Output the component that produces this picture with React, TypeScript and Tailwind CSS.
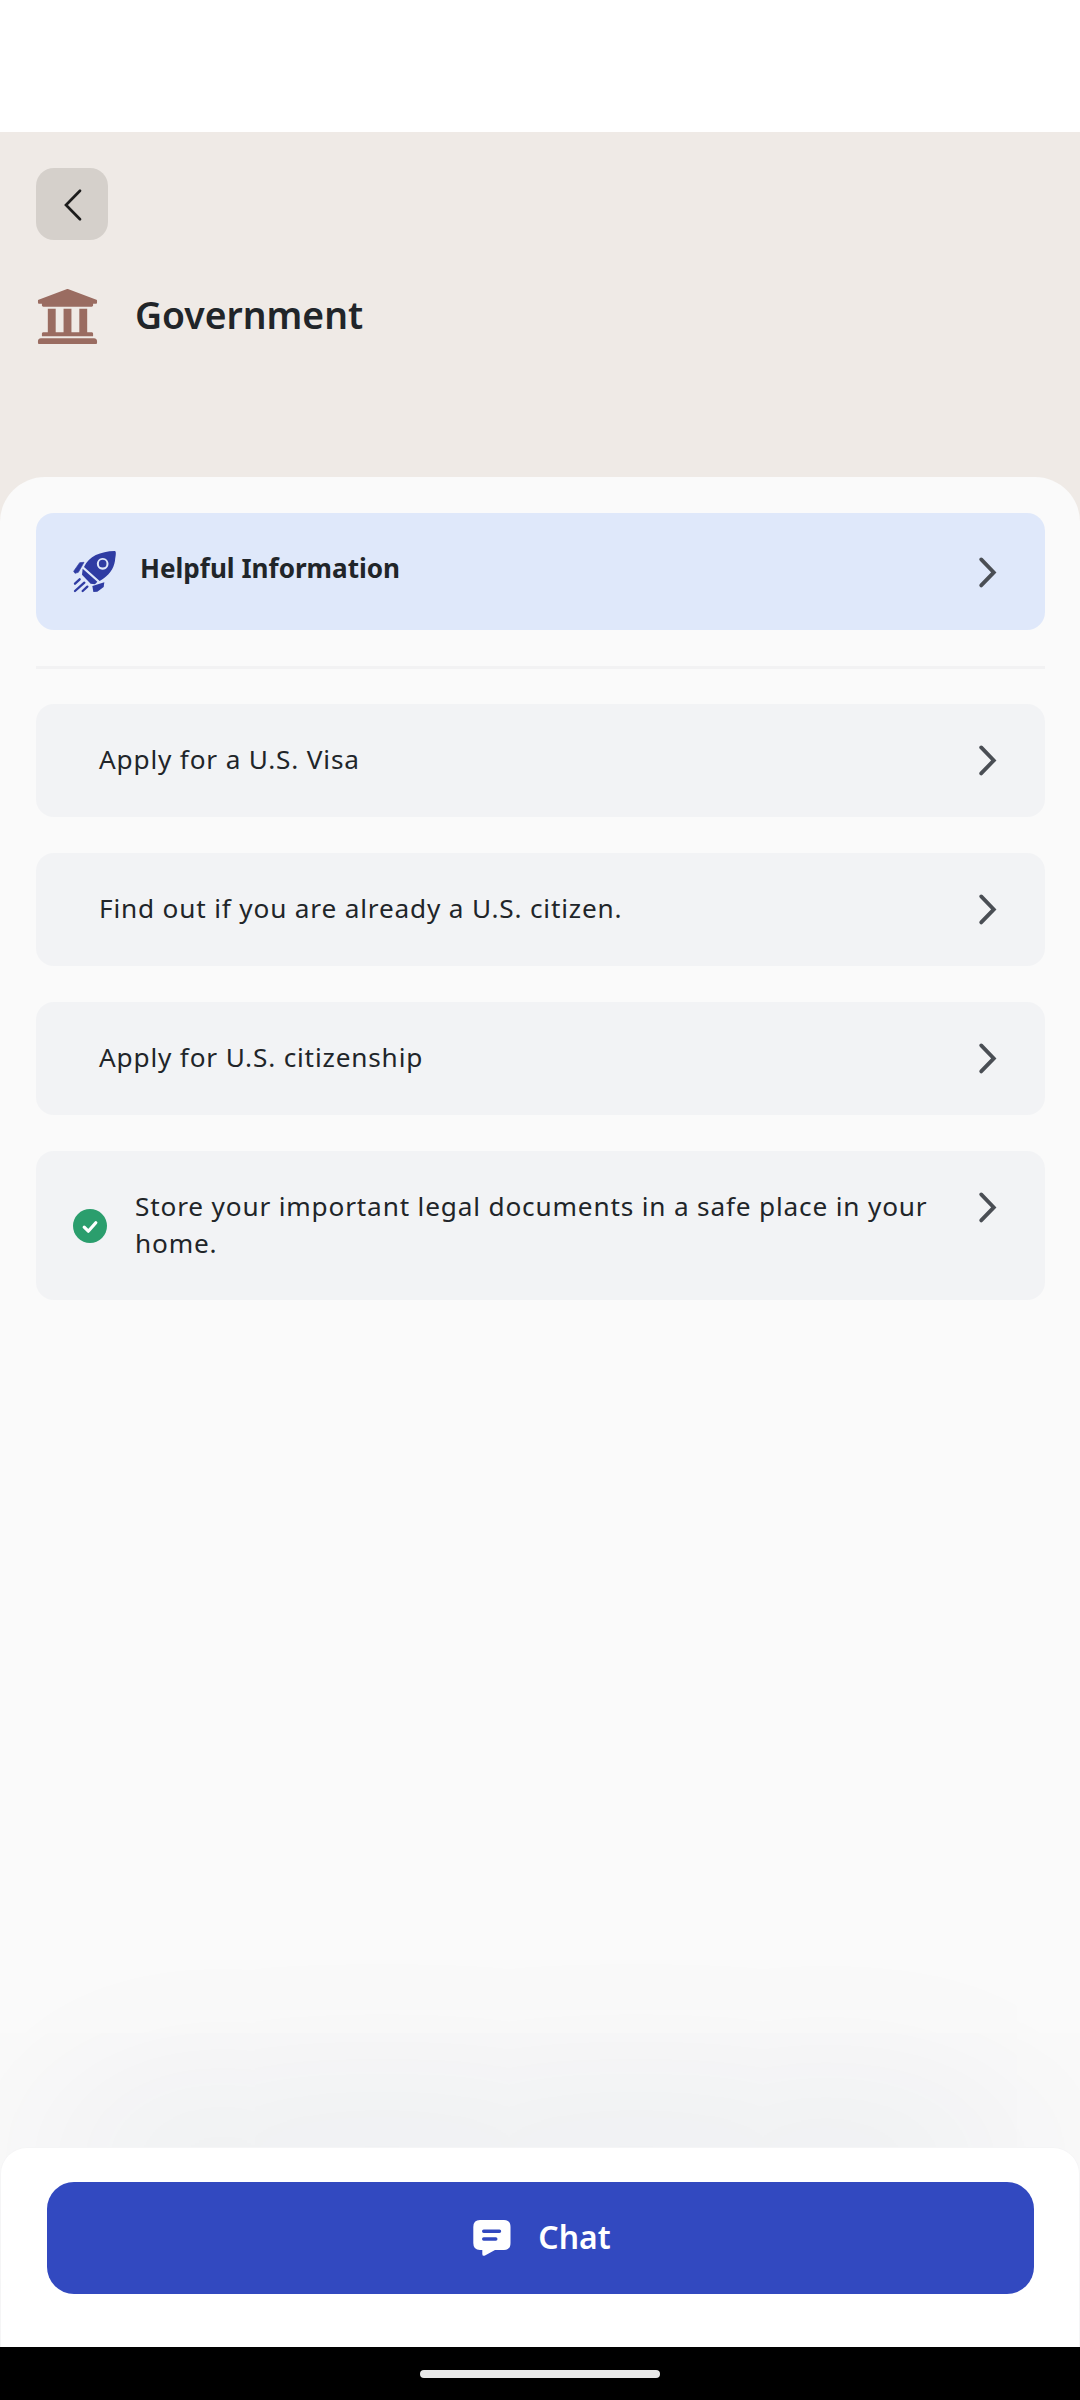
import React from 'react';
import { FaUniversity } from 'react-icons/fa';

interface Task {
  title: string;
  done?: boolean;
}

const tasks: Task[] = [
  { title: 'Apply for a U.S. Visa' },
  { title: 'Find out if you are already a U.S. citizen.' },
  { title: 'Apply for U.S. citizenship' },
  { title: 'Store your important legal documents in a safe place in your home.', done: true },
];

function ChevronRight() {
  return (
    <svg className="h-[30px] w-[18px] shrink-0 overflow-visible" viewBox="0 0 18 30" fill="none">
      <path d="M2.2 2.4 L14.8 15.4 L2.2 28.4" stroke="#4a4e54" strokeWidth="3.8" strokeLinecap="round" />
    </svg>
  );
}

function RocketIcon() {
  return (
    <svg className="h-[45px] w-[45px] shrink-0" viewBox="215 270 135 135" fill="#2f3ca3">
      <path
        fillRule="evenodd"
        d="M343 276 C349 276 346 290 344 305 C340 330 326 350 298 366 L251 324 C266 292 300 277 343 276 Z M307 297 a17.5 17.5 0 1 0 0.1 0 Z"
      />
      <circle cx="307" cy="314" r="11.5" />
      <path d="M247 329 L291 368 L284 376 L271 374 L245 347 Z" />
      <path d="M238 311 L251 310 L234 340 L224 343 L220 337 Z" stroke="#2f3ca3" strokeWidth="2" strokeLinejoin="round" />
      <path d="M276 381 L312 370 L310 384 L291 398 L279 399 Z" />
      <path d="M238 361 L224 374 M252 371 L224 396 M261 383 L247 396" stroke="#2f3ca3" strokeWidth="7" strokeLinecap="round" />
    </svg>
  );
}

function ChatIcon() {
  return (
    <svg className="h-9 w-[38px] shrink-0" viewBox="0 0 38 36" fill="none">
      <path d="M7 0 H31 Q37.5 0 37.5 7 V23 Q37.5 30 31 30 H22 L12 35.6 Q9.3 36.5 9.3 34 V30 H7 Q0.3 30 0.3 23 V7 Q0.3 0 7 0 Z" fill="#fff" />
      <path d="M10.7 11.3 H26.5 M10.7 19 H22.8" stroke="#3249c0" strokeWidth="3.4" strokeLinecap="round" />
    </svg>
  );
}

function CheckBadge() {
  return (
    <svg className="h-[34px] w-[34px] shrink-0" viewBox="0 0 34 34" fill="none">
      <circle cx="17" cy="17" r="17" fill="#2b9e6d" />
      <path d="M11.2 18.2 L15.3 22.2 L22.8 13.7" stroke="#fff" strokeWidth="3.2" strokeLinecap="round" strokeLinejoin="round" />
    </svg>
  );
}

function TaskCard({ title, done }: Task) {
  return (
    <button
      className={
        'flex w-full items-start rounded-[18px] bg-[#f2f3f5] pr-[48px] text-left ' +
        (done ? 'h-[149px] pl-[37px]' : 'h-[113px] pl-[63px]')
      }
    >
      {done && (
        <span className="mt-[58px] mr-[28px]">
          <CheckBadge />
        </span>
      )}
      <span className="mt-[37px] flex-1 text-[26.2px] leading-[37px] tracking-[0.83px] text-[#212529]">{title}</span>
      <span className="mt-[41px] ml-6">
        <ChevronRight />
      </span>
    </button>
  );
}

export default function App() {
  return (
    <div className="flex h-[2400px] w-[1080px] flex-col overflow-hidden bg-[#efeae6] font-['Noto_Sans',sans-serif]">
      <div className="h-[132px] shrink-0 bg-white" />

      {/* header */}
      <header className="h-[345px] shrink-0 px-9 pt-9">
        <button className="flex h-[72px] w-[72px] items-center justify-center rounded-[18px] bg-[#d5d0cb]">
          <svg className="h-[32px] w-[18px] overflow-visible" viewBox="0 0 18 32" fill="none">
            <path d="M17 2.8 L3 17 L17 31.2" stroke="#1c1c1c" strokeWidth="2.7" strokeLinecap="round" />
          </svg>
        </button>
        <div className="mt-[45px] flex items-center">
          <FaUniversity className="h-[63px] w-[63px] text-[#9a6c61]" />
          <h1 className="-mt-[3px] ml-9 text-[37.3px] leading-[48px] font-semibold text-[#212529]">Government</h1>
        </div>
      </header>

      {/* content */}
      <main className="flex min-h-0 flex-1 flex-col rounded-t-[45px] bg-[#fafafa] pt-9 pr-[35px] pl-9">
        <button className="flex h-[117px] w-full shrink-0 items-center rounded-[18px] bg-[#dfe8fa] pr-[48px] pl-[36px] text-left">
          <RocketIcon />
          <span className="-mt-[6px] ml-[23px] flex-1 text-[26.1px] leading-[37px] font-bold text-[#212529]">
            Helpful Information
          </span>
          <ChevronRight />
        </button>
        <hr className="mt-9 mb-[35px] h-[3px] shrink-0 border-0 bg-[#f2f2f3]" />
        <div className="flex flex-col gap-9">
          {tasks.map(task => (
            <TaskCard key={task.title} {...task} />
          ))}
        </div>
      </main>

      {/* chat bar */}
      <footer className="h-[200px] shrink-0 bg-[#fafafa]">
        <div className="relative h-full rounded-t-[27px] border-x border-t border-[#f5f5f6] bg-white pt-[34px] pr-[45px] pl-[46px] shadow-[0_-80px_200px_-62px_rgba(20,40,80,0.135)]">
          <button className="flex h-[112px] w-full items-center justify-center rounded-[27px] bg-[#3249c0] pl-[3px] text-white">
            <ChatIcon />
            <span className="-mt-[2px] ml-[27px] text-[31.9px] leading-[42px] font-semibold">Chat</span>
          </button>
        </div>
      </footer>

      <div className="relative flex h-[53px] shrink-0 justify-center bg-black pt-[23px]">
        <div className="h-2 w-60 rounded-full bg-[#eaeaea]" />
      </div>
    </div>
  );
}
